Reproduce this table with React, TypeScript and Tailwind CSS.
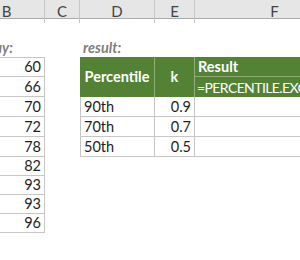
import React from "react";

const cols = "grid-cols-[76px_35px_75px_40px_160px]";
const values = [60, 66, 70, 72, 78, 82, 93, 93, 96];
const results = [
  { p: "90th", k: "0.9" },
  { p: "70th", k: "0.7" },
  { p: "50th", k: "0.5" },
];

const App: React.FC = () => {
  return (
    <div
      className="w-[300px] h-[260px] overflow-hidden bg-white text-[14.5px] text-[#1e1e1e]"
      style={{ fontFamily: "Lato, 'Open Sans', sans-serif" }}
    >
      <div className="-ml-[31px] w-[386px]">
        {/* COLUMN HEADERS */}
        <div className={`grid ${cols} h-[19px] bg-[#e6e6e6] border-b border-[#ababab] text-[#444] text-[15px]`}>
          {["B", "C", "D", "E", "F"].map((c) => (
            <div key={c} className="flex items-center justify-center border-r border-[#c6c6c6]">
              {c}
            </div>
          ))}
        </div>

        {/* SHEET BODY */}
        <div className={`grid ${cols} grid-rows-[19px_19px_20px_20px_20px_20px_20px_19px_19px_19px_19px_19px_19px]`}>
          {/* row 1 empty */}
          <div className="col-span-5 h-[19px]" />

          {/* row 2 labels */}
          <div className="col-start-1 row-start-2 flex items-center pl-[8px] font-bold italic text-[#7f7f7f] whitespace-nowrap">
            array:
          </div>
          <div className="col-start-3 row-start-2 flex items-center pl-[3px] font-bold italic text-[#7f7f7f] whitespace-nowrap">
            result:
          </div>

          {/* data column B */}
          {values.map((v, i) => (
            <div
              key={i}
              style={{ gridRowStart: i + 3 }}
              className={`col-start-1 flex items-center justify-end pr-[3px] border-r border-b border-[#c6c6c6] ${i === 0 ? "border-t" : ""}`}
            >
              {v}
            </div>
          ))}

          {/* green header */}
          <div className="col-start-3 row-start-3 row-span-2 flex items-center justify-center bg-[#548235] text-white font-bold border-r border-[#8fae73]">
            Percentile
          </div>
          <div className="col-start-4 row-start-3 row-span-2 flex items-center justify-center bg-[#548235] text-white font-bold border-r border-[#8fae73]">
            k
          </div>
          <div className="col-start-5 row-start-3 flex items-center pl-[3px] bg-[#548235] text-white font-bold border-b border-[#8fae73]">
            Result
          </div>
          <div className="col-start-5 row-start-4 flex items-center pl-[2px] bg-[#548235] text-white text-[14px] tracking-[-0.6px] whitespace-nowrap">
            =PERCENTILE.EXC(
          </div>

          {/* result rows */}
          {results.map((r, i) => (
            <React.Fragment key={r.p}>
              <div
                style={{ gridRowStart: i + 5 }}
                className="col-start-3 flex items-center pl-[3px] border-l border-r border-b border-[#c6c6c6]"
              >
                {r.p}
              </div>
              <div
                style={{ gridRowStart: i + 5 }}
                className="col-start-4 flex items-center justify-end pr-[3px] border-r border-b border-[#c6c6c6]"
              >
                {r.k}
              </div>
              <div
                style={{ gridRowStart: i + 5 }}
                className="col-start-5 border-r border-b border-[#c6c6c6]"
              />
            </React.Fragment>
          ))}
        </div>
      </div>
    </div>
  );
};

export default App;
